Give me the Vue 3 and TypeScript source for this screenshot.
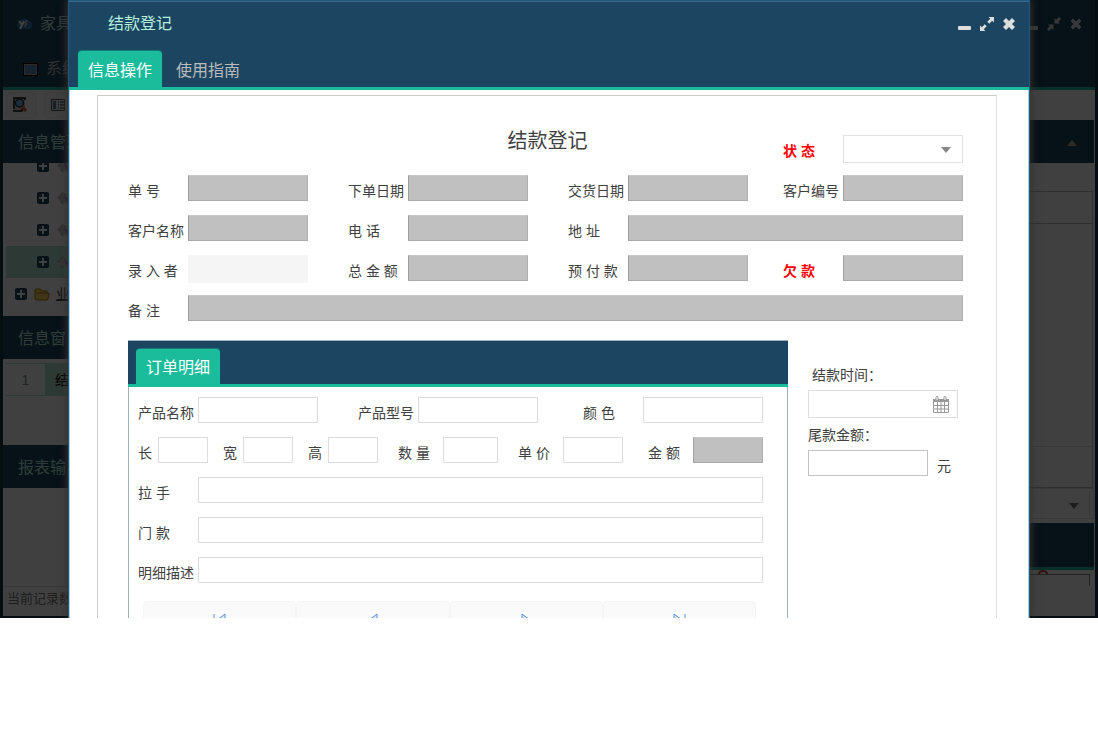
<script setup lang="ts">
import { ref } from 'vue'

interface Field {
  id: string
  label: string
  alert?: boolean
  plain?: boolean
  kind?: string
}

const orderFields: Field[] = [
  { id: 'order-no', label: '单 号' },
  { id: 'order-date', label: '下单日期' },
  { id: 'delivery-date', label: '交货日期' },
  { id: 'customer-no', label: '客户编号', kind: 'last' },
  { id: 'customer-name', label: '客户名称' },
  { id: 'phone', label: '电 话' },
  { id: 'address', label: '地 址', kind: 'wide' },
  { id: 'operator', label: '录 入 者', plain: true },
  { id: 'total', label: '总 金 额' },
  { id: 'prepaid', label: '预 付 款' },
  { id: 'debt', label: '欠 款', alert: true, kind: 'last' },
  { id: 'remark', label: '备 注', kind: 'full' },
]

const detailRows: { name: string; fields: { id: string; label: string; locked?: boolean }[] }[] = [
  {
    name: 'product',
    fields: [
      { id: 'product-name', label: '产品名称' },
      { id: 'product-model', label: '产品型号' },
      { id: 'color', label: '颜 色' },
    ],
  },
  {
    name: 'size',
    fields: [
      { id: 'length', label: '长' },
      { id: 'width', label: '宽' },
      { id: 'height', label: '高' },
      { id: 'quantity', label: '数 量' },
      { id: 'price', label: '单 价' },
      { id: 'amount', label: '金 额', locked: true },
    ],
  },
  { name: 'single', fields: [{ id: 'handle', label: '拉 手' }] },
  { name: 'single', fields: [{ id: 'door', label: '门 款' }] },
  { name: 'single', fields: [{ id: 'detail-note', label: '明细描述' }] },
]

const pager = [
  { name: '首条', d: 'M1 1V13M12 1L4 7L12 13Z' },
  { name: '上一条', d: 'M11 1L3 7L11 13Z' },
  { name: '下一条', d: 'M3 1L11 7L3 13Z' },
  { name: '末条', d: 'M13 1V13M2 1L10 7L2 13Z' },
]

const activeTab = ref('信息操作')
const dialogTabs = ['信息操作', '使用指南']
const treeRows = [0, 1, 2, 3]
</script>

<template>
  <div class="desktop">
    <div class="shell">
      <header class="shell-head">
        <div class="shell-title">
          <svg class="logo" viewBox="0 0 16 14"><path d="M4 12a4 4 0 0 1-1-7 5 5 0 0 1 9-1 4 4 0 0 1 1 8z" fill="#2f78ac" /><path d="M3 4l3 4 2-4M6 8l-2 4" fill="none" stroke="#fff" stroke-width="2" /><path d="M12 4h-2l-1 6M9 7h2" fill="none" stroke="#d8b8b8" stroke-width="1.500" /></svg>
          <span>家具</span>
          <div class="tools">
            <button type="button" aria-label="最小化"><svg viewBox="0 0 14 14"><rect x="0" y="9" width="13" height="4" rx="1" /></svg></button>
            <button type="button" aria-label="还原"><svg viewBox="0 0 14 14"><path d="M7.500 1v5.500H13l-1.800-1.800L14 1.900 12.100 0 9.300 2.800zM6.500 13V7.500H1l1.800 1.800L0 12.100 1.900 14l2.800-2.800z" /></svg></button>
            <button type="button" aria-label="关闭"><svg viewBox="0 0 14 14"><path d="M4 1.500L7 4.500l3-3L12.500 4l-3 3 3 3L10 12.500l-3-3-3 3L1.500 10l3-3-3-3z" /></svg></button>
          </div>
        </div>
        <div class="shell-menu">
          <svg class="menu-icon" viewBox="0 0 15 13"><rect x=".5" y=".5" width="14" height="12" fill="#aaa" stroke="#000" /><rect x="2" y="2" width="11" height="9" fill="#5c90bc" /></svg>
          <span>系统</span>
        </div>
      </header>

      <div class="toolbar">
        <button type="button" aria-label="查询">
          <svg viewBox="0 0 16 16"><path d="M2 1h11v12H2z" fill="#ccc" /><path d="M1 1h12v2M2 2v10M1 14h9v-2" fill="none" stroke="#111" stroke-width="1.500" /><circle cx="7.500" cy="6" r="4" fill="#70b8e8" stroke="#333" stroke-width="1.500" /><path d="M10.500 10l3.500 4" stroke="#d86020" stroke-width="3" /></svg>
        </button>
        <button type="button" aria-label="列表">
          <svg viewBox="0 0 16 16"><path d="M1.500 2.500h13v11h-13z" fill="#eee" stroke="#555" /><path d="M3 4h3v8H3z" fill="#4488b0" /><path d="M8 5h1M8 8h1M8 11h1M10 5h4M10 8h4M10 11h4" stroke="#222" stroke-width="1.200" /></svg>
        </button>
      </div>

      <div class="shell-body">
        <aside class="side">
          <h2>信息管理</h2>
          <ul class="tree">
            <li v-for="n in treeRows" :key="n" :class="{ selected: n === 3 }">
              <svg class="plus" viewBox="0 0 12 12"><rect width="12" height="12" rx="2" fill="#1c4561" /><path d="M6 2v8M2 6h8" stroke="#fff" stroke-width="2" /></svg>
              <svg class="leaf" viewBox="0 0 16 16"><path d="M1 8l5-6 3 2 5-1v9l-4 3-3-2-2 1z" fill="#ccc" /><path d="M1 8l5-6M4 12l2 2M7 5l2 1" stroke="#666" stroke-dasharray="1 1" /><path d="M8 7l4 5" stroke="#9050a8" stroke-width="2" /></svg>
            </li>
            <li class="branch">
              <svg class="plus" viewBox="0 0 12 12"><rect width="12" height="12" rx="2" fill="#1c4561" /><path d="M6 2v8M2 6h8" stroke="#fff" stroke-width="2" /></svg>
              <svg class="folder" viewBox="0 0 16 13"><path d="M1 11V2l1-1h4l2 2h5v2h2l-1 6-1 1H2z" fill="#ffd75e" stroke="#b07c10" /><path d="M3 5h11" stroke="#b07c10" /></svg>
              <a href="#">业务</a>
            </li>
          </ul>
          <h2>信息窗口</h2>
          <div class="windows"><span class="index">1</span><span class="name">结款登记</span></div>
          <h2>报表输出</h2>
          <footer>当前记录数</footer>
        </aside>
        <main class="work">
          <div class="bar"><svg viewBox="0 0 10 6"><path d="M0 6L5 0l5 6z" /></svg></div>
          <div class="filter"></div>
          <div class="list"></div>
          <div class="choice"><div><svg viewBox="0 0 10 6"><path d="M0 0h10L5 6z" /></svg></div></div>
          <div class="bar under"></div>
          <div class="rest"><svg viewBox="0 0 10 4"><path d="M1 4a4 3 0 0 1 8 0" /></svg><div></div></div>
        </main>
      </div>
    </div>

    <div class="mask"></div>

    <section class="dialog" role="dialog" aria-labelledby="dialog-title">
      <header class="dialog-head">
        <div class="dialog-title">
          <span id="dialog-title">结款登记</span>
          <div class="tools">
            <button type="button" aria-label="最小化"><svg viewBox="0 0 14 14"><rect x="0" y="9" width="13" height="4" rx="1" /></svg></button>
            <button type="button" aria-label="最大化"><svg viewBox="0 0 14 14"><path d="M8.500 0H14v5.500l-1.800-1.800-3 3-1.900-1.900 3-3zM5.500 14H0V8.500l1.800 1.800 3-3 1.900 1.900-3 3z" /></svg></button>
            <button type="button" aria-label="关闭"><svg viewBox="0 0 14 14"><path d="M4 1L7 4l3-3 3 3-3 3 3 3-3 3-3-3-3 3-3-3 3-3-3-3z" /></svg></button>
          </div>
        </div>
        <nav class="tabs">
          <button v-for="tab in dialogTabs" :key="tab" type="button" :class="{ active: tab === activeTab }" @click="activeTab = tab">{{ tab }}</button>
        </nav>
      </header>

      <div class="dialog-body">
        <form class="sheet" @submit.prevent>
          <div class="order">
            <h1>结款登记</h1>
            <label class="alert col-last" for="status">状 态</label>
            <div class="select-wrap">
              <select id="status"><option></option></select>
              <svg viewBox="0 0 10 6"><path d="M0 0h10L5 6z" /></svg>
            </div>
            <template v-for="f in orderFields" :key="f.id">
              <label :for="f.id" :class="{ alert: f.alert, 'col-last': f.kind === 'last' }">{{ f.label }}</label>
              <input :id="f.id" type="text" readonly :class="[f.plain ? 'plain' : 'locked', f.kind]" />
            </template>
          </div>

          <div class="lower">
            <section class="detail">
              <nav class="tabs"><button type="button" class="active">订单明细</button></nav>
              <div class="detail-body">
                <div v-for="(row, i) in detailRows" :key="i" class="row" :class="row.name">
                  <div v-for="f in row.fields" :key="f.id" class="pair">
                    <label :for="f.id">{{ f.label }}</label>
                    <input :id="f.id" type="text" :readonly="f.locked" :class="{ locked: f.locked }" />
                  </div>
                </div>
                <div class="pager">
                  <button v-for="p in pager" :key="p.name" type="button" :aria-label="p.name">
                    <svg viewBox="0 0 14 14"><path :d="p.d" /></svg>
                  </button>
                </div>
              </div>
            </section>

            <aside class="settle">
              <label class="inset" for="pay-time">结款时间：</label>
              <div class="date">
                <input id="pay-time" type="text" />
                <svg viewBox="0 0 16 17"><path d="M.5 4h15v12.500H.5z" fill="#fff" stroke="#999" /><path d="M0 3h16v3H0z" fill="#999" /><path d="M4.500 6v10M8 6v10M11.500 6v10M1 9.500h14M1 13h14" stroke="#999" /><path d="M4 1.500v2M12 1.500v2" stroke="#999" stroke-width="3" stroke-linecap="round" /><path d="M4 1v3M12 1v3" stroke="#fff" /></svg>
              </div>
              <label for="balance">尾款金额：</label>
              <div class="money"><input id="balance" type="text" /><span>元</span></div>
            </aside>
          </div>
        </form>
      </div>
    </section>
  </div>
</template>

<style>
body {
  margin: 0;
  background: #fff;
}
</style>

<style scoped>
* {
  box-sizing: border-box;
}

.desktop {
  position: relative;
  height: calc(100vh - 117px);
  overflow: hidden;
  font: 14px/20px "Liberation Sans", "Noto Sans CJK SC", sans-serif;
  color: #404040;
}

button {
  padding: 0;
  border: 0;
  background: none;
  font: inherit;
  color: inherit;
}

svg {
  display: block;
}

.shell {
  display: flex;
  flex-direction: column;
  height: 100%;
  background: #fff;
  border: 3px solid #12344a;
  border-width: 0 3px 2px;
}

.shell-head {
  height: 90px;
  background: #1c4561;
  border-bottom: 3px solid #1abc9c;
}

.shell-title,
.shell-menu {
  display: flex;
  align-items: center;
  height: 47px;
  padding-left: 13px;
  font-size: 16px;
  color: #b5f0df;
}

.shell-menu {
  height: 44px;
  padding-left: 20px;
  color: #bbb;
}

.logo {
  width: 16px;
  height: 14px;
  margin-right: 8px;
}

.menu-icon {
  width: 15px;
  height: 13px;
  margin-right: 8px;
}

.tools {
  display: flex;
  gap: 8px;
  margin-left: auto;
  padding-right: 12px;
  fill: #ddd;
}

.tools svg {
  width: 14px;
  height: 14px;
}

.toolbar {
  display: flex;
  gap: 7px;
  height: 30px;
  padding: 2px 3px;
}

.toolbar button {
  width: 31px;
  padding-left: 5px;
  border: 1px solid #f0f0f0;
  border-radius: 4px;
  background: #fafafa;
}

.toolbar svg {
  width: 16px;
  height: 16px;
}

.shell-body {
  display: flex;
  flex: 1;
  min-height: 0;
}

.side {
  display: flex;
  flex-direction: column;
  width: 200px;
}

.side h2 {
  flex: none;
  height: 43px;
  margin: 0;
  padding-left: 15px;
  background: #1c4561;
  font-size: 16px;
  font-weight: 400;
  line-height: 45px;
  color: #b5f0df;
}

.tree {
  display: flex;
  flex-direction: column;
  justify-content: flex-end;
  height: 153px;
  margin: 0;
  padding: 0 0 6px 3px;
  overflow: hidden;
  list-style: none;
}

.tree li {
  display: flex;
  flex: none;
  align-items: center;
  height: 32px;
  padding-left: 31px;
}

.tree .branch {
  padding-left: 9px;
}

.tree .selected {
  background: #b2e3d4;
}

.plus {
  width: 12px;
  height: 12px;
}

.leaf {
  width: 16px;
  height: 16px;
  margin-left: 8px;
}

.folder {
  width: 16px;
  height: 13px;
  margin: 0 6px 0 7px;
}

.tree a {
  color: #444;
}

.windows {
  display: flex;
  height: 86px;
  padding: 4px 0 49px 3px;
  line-height: 35px;
}

.index {
  width: 39px;
  border: 1px solid #b2e3d4;
  border-width: 1px 0;
  line-height: 33px;
  text-align: center;
  color: #888;
}

.name {
  flex: 1;
  padding-left: 10px;
  background: #b2e3d4;
  color: #000;
}

.side footer {
  margin-top: auto;
  height: 30px;
  padding-left: 4px;
  border-top: 1px solid #ddd;
  font-size: 13px;
  line-height: 24px;
  color: #777;
}

.work {
  display: flex;
  flex: 1;
  flex-direction: column;
  margin-right: 1px;
}

.bar {
  height: 43px;
  flex: none;
  background: #1c4561;
}

.bar svg,
.choice svg {
  width: 10px;
  height: 6px;
  margin: 20px 17px 0 auto;
  fill: #aaa;
}

.filter {
  height: 28px;
  flex: none;
}

.list {
  flex: 1;
  margin-right: 1px;
  border: 1px solid #bbb;
  border-width: 1px 1px 1px 0;
  background: linear-gradient(#bbb, #bbb) 0 31px / 100% 1px no-repeat, linear-gradient(#ddd, #ddd) 0 calc(100% - 40px) / 100% 1px no-repeat;
}

.choice {
  height: 31px;
  flex: none;
  margin-bottom: 4px;
  padding: 2px 3px 2px 0;
  border: 1px solid #ddd;
}

.choice div {
  height: 25px;
  padding-top: 12px;
  border-right: 1px solid #ddd;
}

.choice svg {
  margin: 0 10px 0 auto;
  fill: #777;
}

.under {
  height: 47px;
  border-bottom: 3px solid #1abc9c;
}

.rest {
  height: 46px;
  flex: none;
  padding-right: 4px;
}

.rest svg {
  width: 10px;
  height: 4px;
  margin: 0 42px 0 auto;
  fill: none;
  stroke: #d04040;
  stroke-width: 2;
}

.rest div {
  height: 12px;
  border: 1px solid #888;
  border-width: 1px 1px 0 0;
}

.mask {
  position: absolute;
  inset: 0;
  background: rgba(0, 0, 0, 0.75);
}

.dialog {
  position: absolute;
  inset: 0 68px;
  display: flex;
  flex-direction: column;
  border: 1px solid #21587e;
  border-width: 1px 1px 0;
  background: #fff;
  box-shadow: 0 0 8px 1px #333;
}

.dialog-head {
  flex: none;
  height: 89px;
  border-top: 1px solid #3a6a8c;
  border-bottom: 3px solid #1abc9c;
  background: #1c4561;
}

.dialog-title {
  display: flex;
  align-items: center;
  height: 43px;
  padding-left: 39px;
  font-size: 16px;
  color: #b5f0df;
}

.dialog-title .tools {
  padding-right: 13px;
}

.tabs {
  display: flex;
  gap: 4px;
  padding: 6px 9px 0;
  font-size: 16px;
  color: #bbb;
}

.tabs button {
  height: 36px;
  padding: 4px 10px 0;
  border-radius: 4px 4px 0 0;
}

.tabs .active {
  background: #1abc9c;
  color: #fff;
  box-shadow: 0 -1px 1px #197e7c;
}

.dialog-body {
  flex: 1;
  min-height: 0;
  padding: 5px 31px 0 27px;
  overflow: hidden;
  border: 1px solid #b5cad8;
  border-width: 0 1px;
}

.sheet {
  padding: 39px 33px 40px 30px;
  border: 1px solid #ccc;
  border-width: 1px 1px 0;
  border-right-color: #e2e2e2;
}

label {
  line-height: 32px;
  white-space: nowrap;
}

.order {
  display: grid;
  grid-template-columns: 60px minmax(0, 1fr) 40px 60px minmax(0, 1fr) 40px 60px minmax(0, 1fr) 35px 60px minmax(0, 1fr);
  grid-auto-rows: 40px;
  align-items: start;
}

h1 {
  grid-row: 1;
  grid-column: 1 / -1;
  margin: -10px 0 0;
  padding-left: 4px;
  font-size: 20px;
  font-weight: 400;
  line-height: 32px;
  text-align: center;
}

.order > .col-last {
  grid-column: 10;
}

.order > label[for="status"] {
  grid-row: 1;
}

.order > label[for="order-date"],
.order > label[for="phone"],
.order > label[for="total"] {
  grid-column: 4;
}

.order > label[for="delivery-date"],
.order > label[for="address"],
.order > label[for="prepaid"] {
  grid-column: 7;
}

.order > label[for="order-no"],
.order > label[for="customer-name"],
.order > label[for="operator"],
.order > label[for="remark"] {
  grid-column: 1;
}

.order .wide {
  grid-column: 8 / -1;
}

.order .full {
  grid-column: 2 / -1;
}

.alert {
  font-weight: 700;
  color: #f00;
}

input,
select {
  width: 100%;
  min-width: 0;
  height: 26px;
  margin: 0;
  padding: 2px 4px;
  border: 1px solid #ddd;
  border-radius: 0;
  outline: 0;
  background: #fff;
  font: inherit;
  color: inherit;
}

.locked {
  border-color: #c8c8c8 #b0b0b0 #aaa #a0a0a0;
  background: #c0c0c0;
}

.plain {
  height: 28px;
  border-color: #f5f5f5;
  background: #f5f5f5;
}

.select-wrap {
  position: relative;
  grid-row: 1;
  grid-column: 11;
}

select {
  display: block;
  height: 28px;
  border-color: #e2e2e2;
  appearance: none;
}

.select-wrap svg {
  position: absolute;
  top: 12px;
  right: 12px;
  width: 10px;
  height: 6px;
  fill: #888;
  pointer-events: none;
}

.lower {
  display: flex;
  gap: 20px;
  margin-top: 5px;
}

.detail {
  flex: 1;
  min-width: 0;
  border: 1px solid #9bb0c0;
}

.detail .tabs {
  height: 46px;
  margin: 0 -1px;
  padding: 8px 8px 0;
  border-bottom: 3px solid #1abc9c;
  background: #1c4561;
}

.detail .tabs button {
  height: 35px;
  padding-top: 2px;
}

.detail-body {
  padding: 10px 24px 20px 9px;
}

.row {
  display: flex;
  height: 40px;
}

.pair {
  display: flex;
  align-items: flex-start;
}

.pair label {
  flex: none;
  width: 60px;
}

.product .pair {
  flex: 1;
  margin-right: 40px;
}

.product .pair:nth-child(2) {
  margin-right: 45px;
}

.product .pair:nth-child(3) {
  margin-right: 0;
}

.size .pair {
  flex: 70 1 70px;
  margin-right: 15px;
}

.size .pair label {
  width: 20px;
}

.size .pair:nth-child(3),
.size .pair:nth-child(4) {
  margin-right: 20px;
}

.size .pair:nth-child(5) {
  margin-right: 25px;
}

.size .pair:nth-child(n + 4) label {
  width: 45px;
}

.size .pair:nth-child(4) {
  flex: 100 1 100px;
}

.size .pair:nth-child(5) {
  flex: 105 1 105px;
}

.size .pair:nth-child(6) {
  flex: 115 1 115px;
  margin-right: 0;
}

.single .pair {
  flex: 1;
}

.pager {
  display: flex;
  margin: 4px 7px 0 5px;
}

.pager button {
  display: flex;
  flex: 1;
  justify-content: center;
  height: 36px;
  padding-top: 11px;
  border: 1px solid #f5f5f5;
  border-radius: 4px;
  background: #fafafa;
}

.pager svg {
  width: 14px;
  height: 14px;
  fill: #cfe4fa;
  stroke: #5a94d6;
  stroke-width: 1;
}

.settle {
  display: flex;
  flex-direction: column;
  width: 155px;
  padding-top: 20px;
}

.settle label {
  line-height: 30px;
}

.settle .inset {
  padding-left: 4px;
}

.date {
  position: relative;
  width: 150px;
}

.date input {
  display: block;
  height: 28px;
  padding-right: 28px;
}

.date svg {
  position: absolute;
  top: 6px;
  right: 9px;
  width: 16px;
  height: 17px;
}

.date + label {
  margin-top: 2px;
}

.money {
  display: flex;
  gap: 9px;
  line-height: 32px;
}

.money input {
  width: 120px;
  border-color: #c4c4c4;
}
</style>
